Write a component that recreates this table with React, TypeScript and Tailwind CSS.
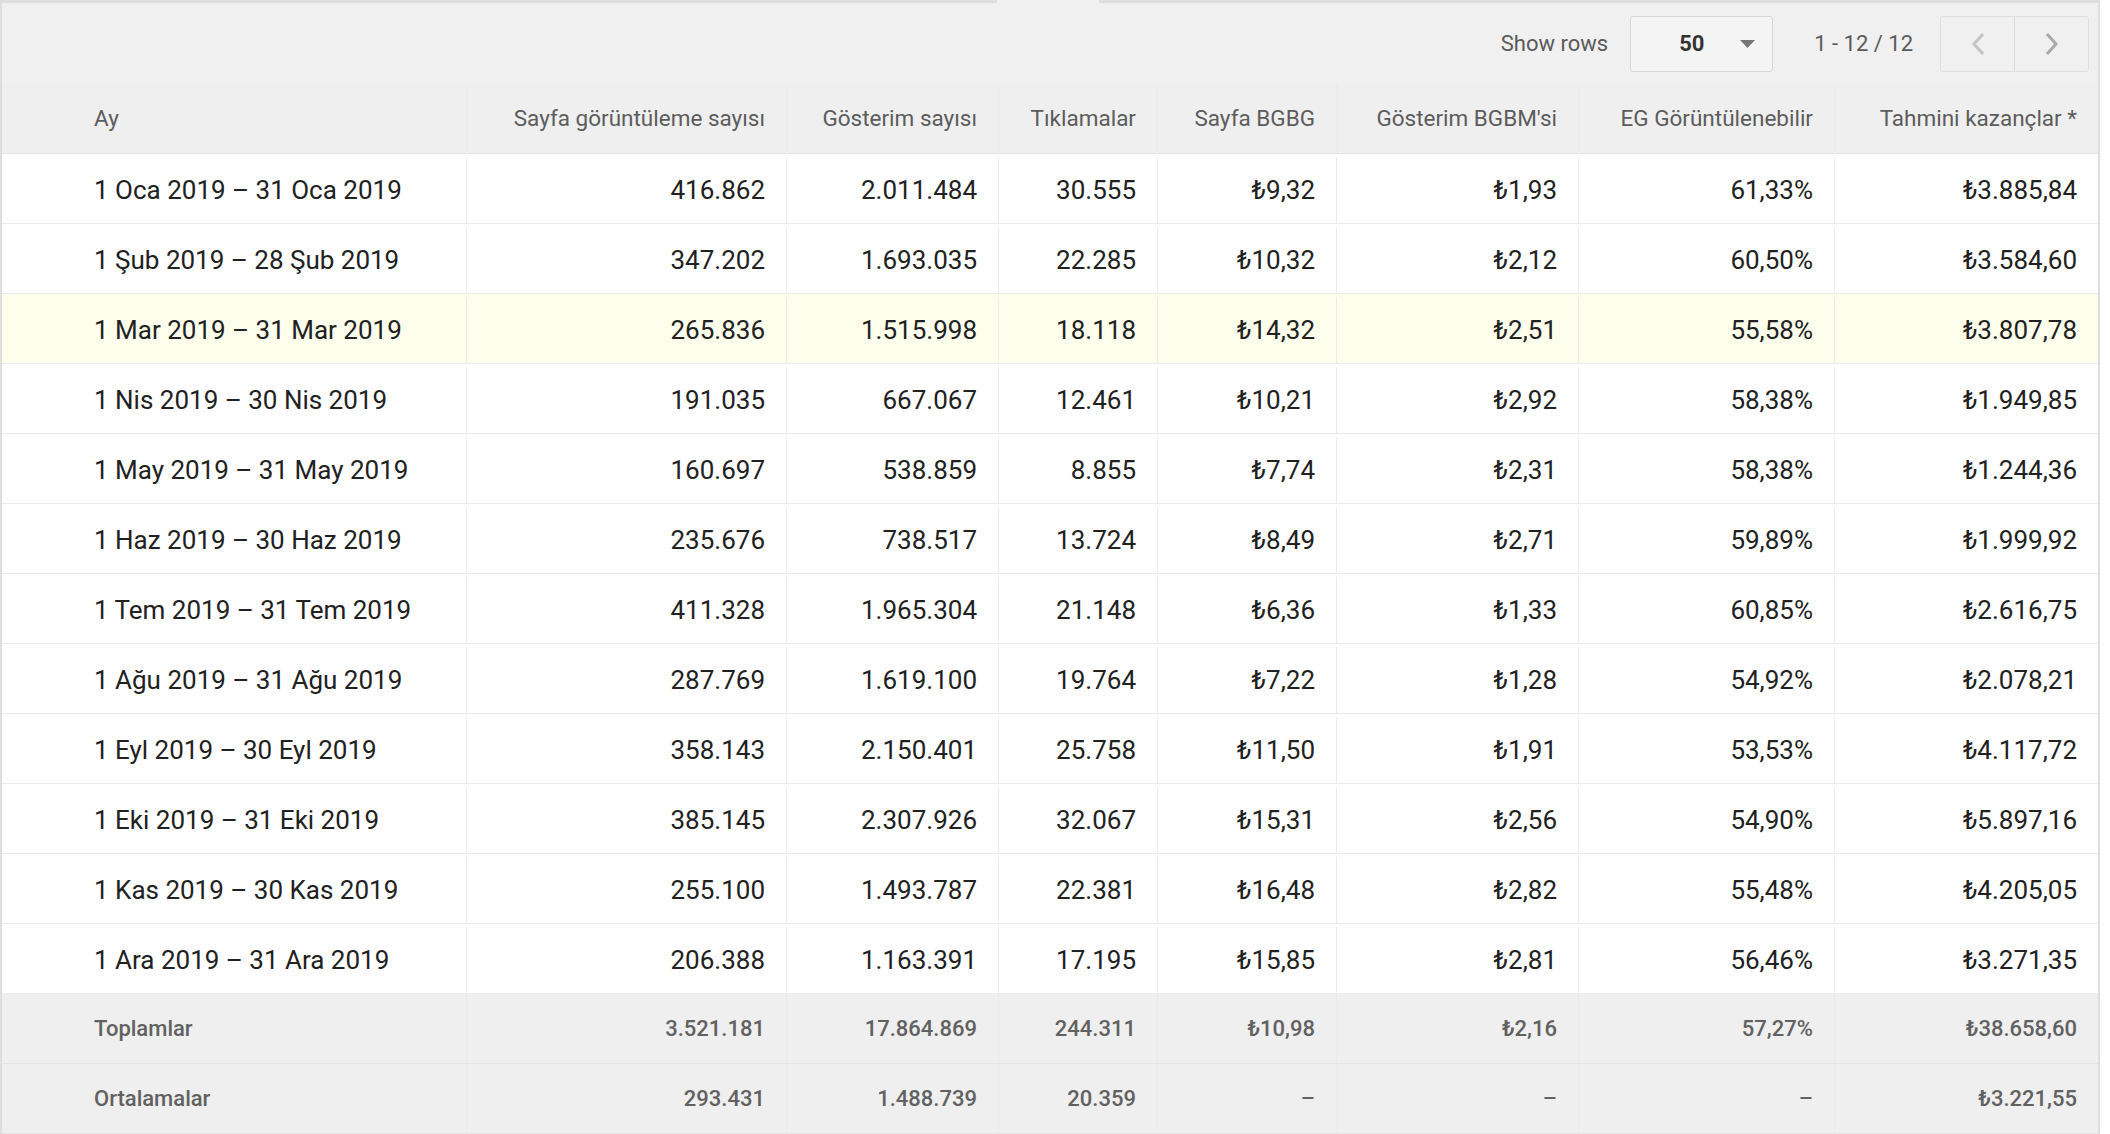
const rows = [
  ["1 Oca 2019 – 31 Oca 2019", "416.862", "2.011.484", "30.555", "₺9,32", "₺1,93", "61,33%", "₺3.885,84"],
  ["1 Şub 2019 – 28 Şub 2019", "347.202", "1.693.035", "22.285", "₺10,32", "₺2,12", "60,50%", "₺3.584,60"],
  ["1 Mar 2019 – 31 Mar 2019", "265.836", "1.515.998", "18.118", "₺14,32", "₺2,51", "55,58%", "₺3.807,78"],
  ["1 Nis 2019 – 30 Nis 2019", "191.035", "667.067", "12.461", "₺10,21", "₺2,92", "58,38%", "₺1.949,85"],
  ["1 May 2019 – 31 May 2019", "160.697", "538.859", "8.855", "₺7,74", "₺2,31", "58,38%", "₺1.244,36"],
  ["1 Haz 2019 – 30 Haz 2019", "235.676", "738.517", "13.724", "₺8,49", "₺2,71", "59,89%", "₺1.999,92"],
  ["1 Tem 2019 – 31 Tem 2019", "411.328", "1.965.304", "21.148", "₺6,36", "₺1,33", "60,85%", "₺2.616,75"],
  ["1 Ağu 2019 – 31 Ağu 2019", "287.769", "1.619.100", "19.764", "₺7,22", "₺1,28", "54,92%", "₺2.078,21"],
  ["1 Eyl 2019 – 30 Eyl 2019", "358.143", "2.150.401", "25.758", "₺11,50", "₺1,91", "53,53%", "₺4.117,72"],
  ["1 Eki 2019 – 31 Eki 2019", "385.145", "2.307.926", "32.067", "₺15,31", "₺2,56", "54,90%", "₺5.897,16"],
  ["1 Kas 2019 – 30 Kas 2019", "255.100", "1.493.787", "22.381", "₺16,48", "₺2,82", "55,48%", "₺4.205,05"],
  ["1 Ara 2019 – 31 Ara 2019", "206.388", "1.163.391", "17.195", "₺15,85", "₺2,81", "56,46%", "₺3.271,35"],
]

const headers = [
  "Ay",
  "Sayfa görüntüleme sayısı",
  "Gösterim sayısı",
  "Tıklamalar",
  "Sayfa BGBG",
  "Gösterim BGBM'si",
  "EG Görüntülenebilir",
  "Tahmini kazançlar *",
]

const totals = [
  ["Toplamlar", "3.521.181", "17.864.869", "244.311", "₺10,98", "₺2,16", "57,27%", "₺38.658,60"],
  ["Ortalamalar", "293.431", "1.488.739", "20.359", "–", "–", "–", "₺3.221,55"],
]

const grid = "grid grid-cols-[465px_320px_212px_159px_179px_242px_256px_1fr]"

function Cell({ text, first }: { text: string; first: boolean }) {
  return (
    <div
      className={
        first
          ? "flex items-center pl-[92px] pr-4 border-r border-[#ebebeb]"
          : "flex items-center justify-end pr-[21px] border-r border-[#ebebeb] last:border-r-0"
      }
    >
      {text}
    </div>
  )
}

function Chevron({ dir, color }: { dir: "left" | "right"; color: string }) {
  return (
    <svg width="16" height="24" viewBox="0 0 16 24">
      <path
        d={dir === "left" ? "M13 2L4 12l9 10" : "M3 2l9 10-9 10"}
        fill="none"
        stroke={color}
        strokeWidth="3"
      />
    </svg>
  )
}

export default function App() {
  return (
    <div className="w-[2110px] h-[1134px] overflow-hidden bg-white font-['Roboto',_'DejaVu_Sans',_sans-serif]">
      <div className="w-[2100px] h-full border-l-2 border-r-2 border-[#dedede]">
        {/* Top border with tab gap */}
        <div className="flex h-[3px] bg-[#f0f0f0]">
          <div className="w-[995px] border-t-[3px] border-[#dedede]" />
          <div className="w-[102px]" />
          <div className="flex-1 border-t-[3px] border-[#dedede]" />
        </div>

        {/* Toolbar */}
        <div className="h-[81px] bg-[#f0f0f0] flex items-center justify-end pr-[9px] text-[22px] text-[#5a5a5a]">
          <span className="mr-[22px]">Show rows</span>
          <div className="w-[143px] h-[56px] border border-[#d6d6d6] rounded-[3px] bg-[#f4f4f4] flex items-center pl-[48px] pr-[17px]">
            <span className="font-bold text-[#333] flex-1">50</span>
            <svg width="15" height="8" viewBox="0 0 15 8">
              <path d="M0 0h15L7.5 8z" fill="#757575" />
            </svg>
          </div>
          <span className="ml-[41px] mr-[27px]">1 - 12 / 12</span>
          <div className="flex h-[56px] border border-[#dfdfdf] rounded-[3px] bg-[#f0f0f0]">
            <div className="w-[74px] flex items-center justify-center border-r border-[#dcdcdc]">
              <Chevron dir="left" color="#c4c4c4" />
            </div>
            <div className="w-[73px] flex items-center justify-center">
              <Chevron dir="right" color="#a9a9a9" />
            </div>
          </div>
        </div>

        {/* Header */}
        <div className={`${grid} h-[70px] bg-[#efefef] text-[22.5px] text-[#5c5c5c] border-b border-[#e4e4e4]`}>
          {headers.map((h, i) => (
            <Cell key={h} text={h} first={i === 0} />
          ))}
        </div>

        {/* Data rows */}
        {rows.map((r, ri) => (
          <div
            key={r[0]}
            className={`${grid} h-[70px] pt-[3px] text-[26px] text-[#212121] border-b border-[#ebebeb] ${ri === 2 ? "bg-[#fdfeeb]" : "bg-white"}`}
          >
            {r.map((c, i) => (
              <Cell key={i} text={c} first={i === 0} />
            ))}
          </div>
        ))}

        {/* Totals */}
        {totals.map((r) => (
          <div
            key={r[0]}
            className={`${grid} h-[70px] text-[22px] font-medium text-[#616161] bg-[#efefef] border-b border-[#e4e4e4]`}
          >
            {r.map((c, i) => (
              <Cell key={i} text={c} first={i === 0} />
            ))}
          </div>
        ))}
      </div>
    </div>
  )
}
